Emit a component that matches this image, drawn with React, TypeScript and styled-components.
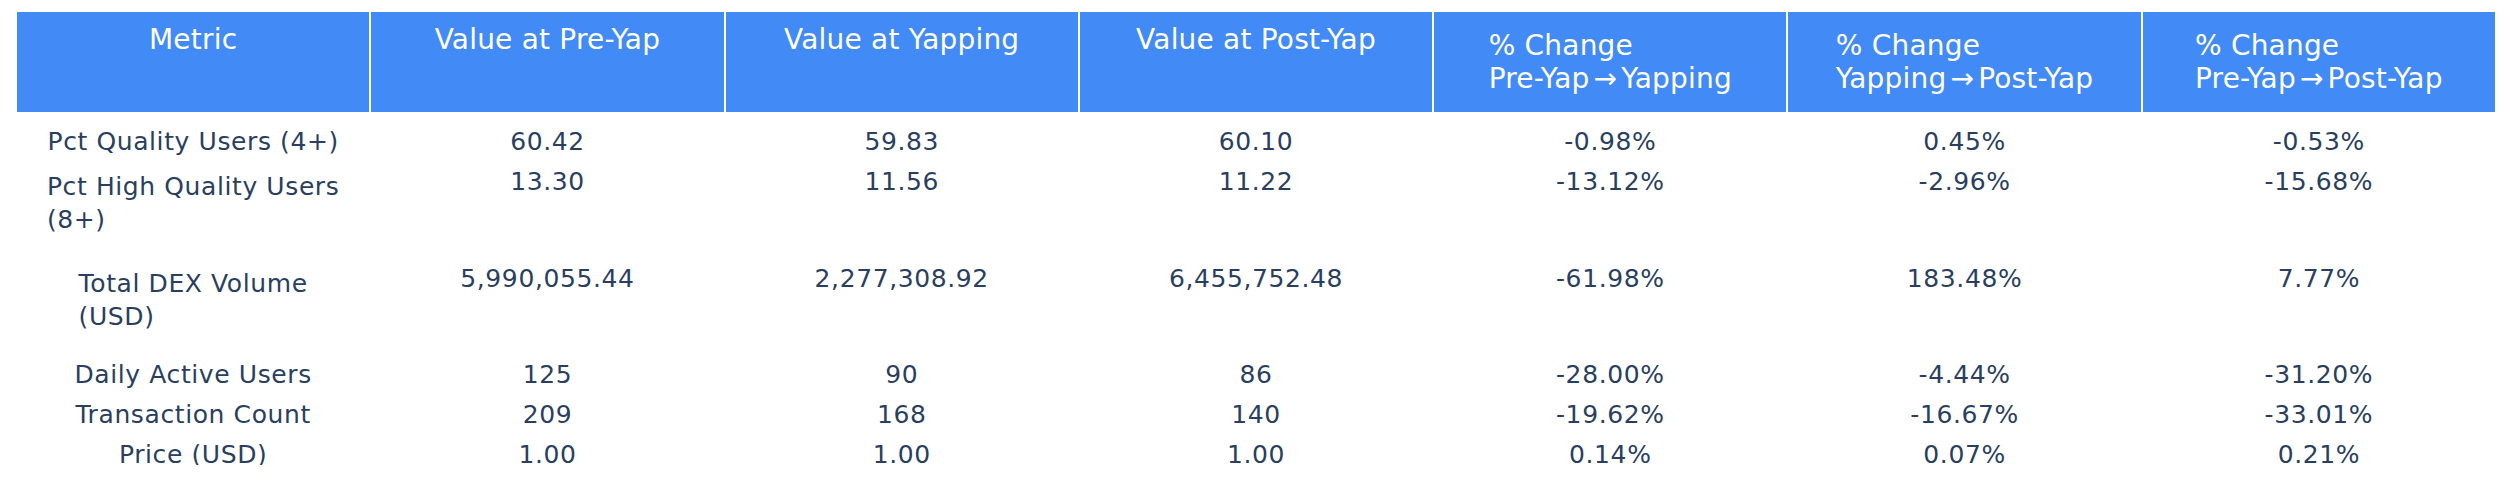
import { FC } from "react";
import styled, { createGlobalStyle } from "styled-components";

const GlobalStyle = createGlobalStyle`
  body {
    margin: 0;
    background: #fff;
  }
`;

const SPage = styled.div`
  padding: 12px 0 0 17px;
  font-family: "DejaVu Sans", Verdana, sans-serif;
`;

const STable = styled.div`
  width: 2478px;
`;

const SRow = styled.div<{ $height: number }>`
  display: grid;
  grid-template-columns: repeat(7, 1fr);
  column-gap: 2px;
  height: ${(p) => p.$height}px;
`;

const SHeadCell = styled.div<{ $top: number }>`
  background: #428af6;
  color: #fff;
  font-size: 28px;
  line-height: 33px;
  letter-spacing: 0.2px;
  text-align: center;
  padding-top: ${(p) => p.$top}px;
  box-sizing: border-box;
`;

const SCell = styled.div<{ $top: number }>`
  color: #2a3f5f;
  font-size: 25px;
  line-height: 33px;
  letter-spacing: 0.6px;
  text-align: center;
  padding-top: ${(p) => p.$top}px;
  box-sizing: border-box;
`;

// lines stay left-aligned while the block itself sits centred
const SBlock = styled.span`
  display: inline-block;
  text-align: left;
  white-space: nowrap;
`;

const SArrow = styled.span`
  display: inline-block;
  padding: 0 4px;
`;

const headers: string[][] = [
  ["Metric"],
  ["Value at Pre-Yap"],
  ["Value at Yapping"],
  ["Value at Post-Yap"],
  ["% Change", "Pre-Yap|Yapping"],
  ["% Change", "Yapping|Post-Yap"],
  ["% Change", "Pre-Yap|Post-Yap"],
];

type Row = { label: string[]; values: string[]; height: number };

const rows: Row[] = [
  {
    label: ["Pct Quality Users (4+)"],
    values: ["60.42", "59.83", "60.10", "-0.98%", "0.45%", "-0.53%"],
    height: 40,
  },
  {
    label: ["Pct High Quality Users", "(8+)"],
    values: ["13.30", "11.56", "11.22", "-13.12%", "-2.96%", "-15.68%"],
    height: 97,
  },
  {
    label: ["Total DEX Volume", "(USD)"],
    values: ["5,990,055.44", "2,277,308.92", "6,455,752.48", "-61.98%", "183.48%", "7.77%"],
    height: 96,
  },
  {
    label: ["Daily Active Users"],
    values: ["125", "90", "86", "-28.00%", "-4.44%", "-31.20%"],
    height: 40,
  },
  {
    label: ["Transaction Count"],
    values: ["209", "168", "140", "-19.62%", "-16.67%", "-33.01%"],
    height: 40,
  },
  {
    label: ["Price (USD)"],
    values: ["1.00", "1.00", "1.00", "0.14%", "0.07%", "0.21%"],
    height: 40,
  },
];

const Line: FC<{ text: string }> = ({ text }) => {
  const [from, to] = text.split("|");
  if (to === undefined) return <div>{text}</div>;
  return (
    <div>
      {from}
      <SArrow>{"\u2192"}</SArrow>
      {to}
    </div>
  );
};

const Lines: FC<{ lines: string[] }> = ({ lines }) => (
  <SBlock>
    {lines.map((l, i) => (
      <Line key={i} text={l} />
    ))}
  </SBlock>
);

const App: FC = () => {
  return (
    <SPage>
      <GlobalStyle />
      <STable>
        <SRow $height={100}>
          {headers.map((h, i) => (
            <SHeadCell key={i} $top={h.length > 1 ? 17 : 11}>
              <Lines lines={h} />
            </SHeadCell>
          ))}
        </SRow>
        {rows.map((r, i) => (
          <SRow key={i} $height={r.height}>
            <SCell $top={r.label.length > 1 ? 18 : 13}>
              <Lines lines={r.label} />
            </SCell>
            {r.values.map((v, j) => (
              <SCell key={j} $top={13}>
                {v}
              </SCell>
            ))}
          </SRow>
        ))}
      </STable>
    </SPage>
  );
};

export default App;
